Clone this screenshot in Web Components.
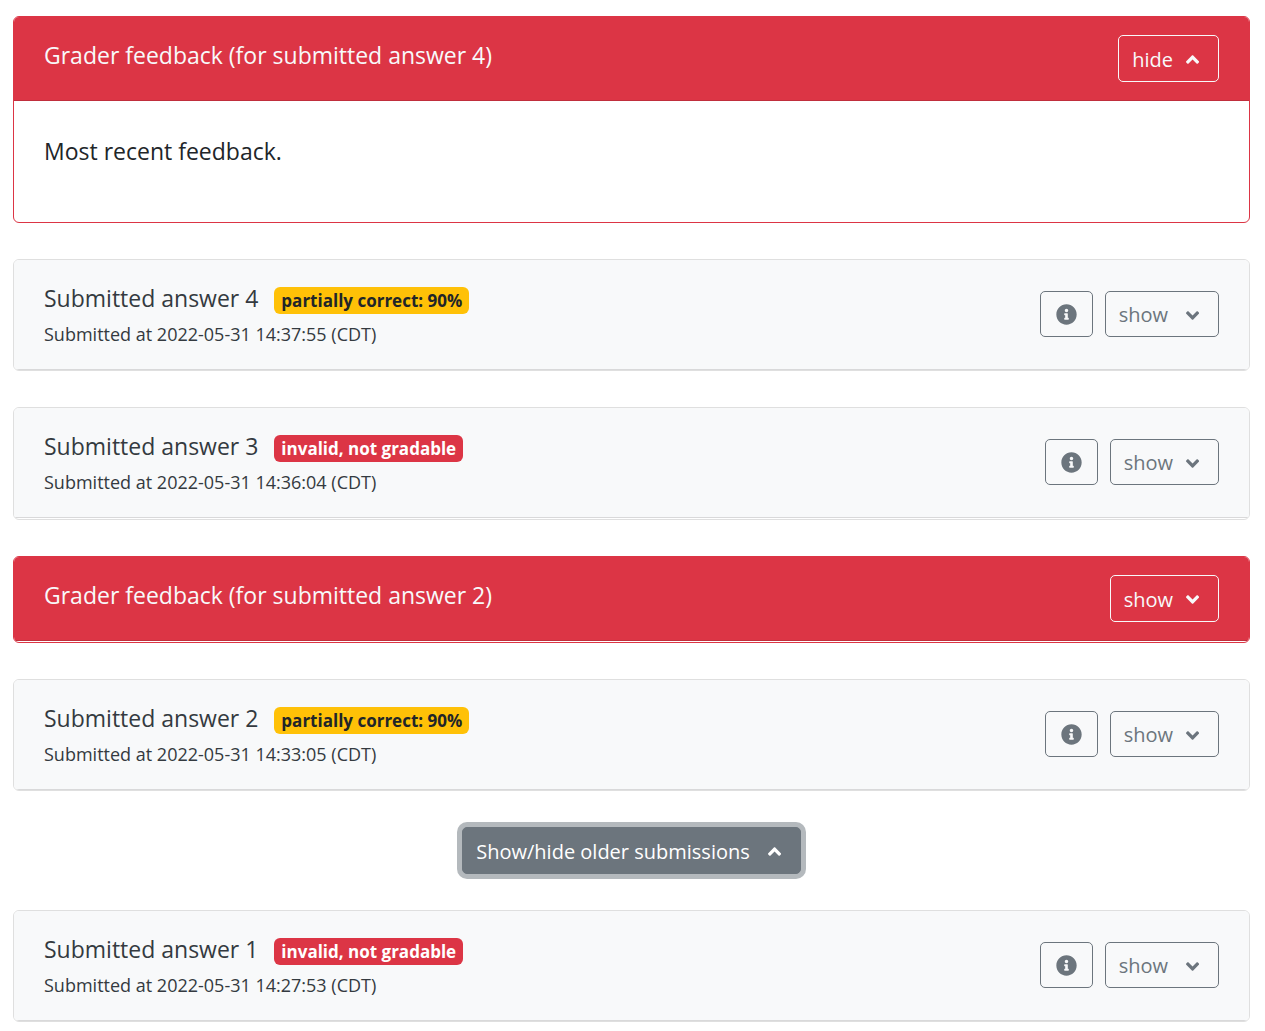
<!DOCTYPE html>
<html lang="en">
<head>
<meta charset="utf-8">
<meta name="viewport" content="width=device-width, initial-scale=1">
<title>Submissions</title>
<style>
  body {
    margin: 0;
    background: #fff;
    color: #212529;
    font-family: "Open Sans", "Noto Sans", sans-serif;
    font-size: 23px;
    line-height: 40px;
  }
</style>
</head>
<body>
<submission-history>
  <feedback-card answer="4" open>Most recent feedback.</feedback-card>
  <submission-card answer="4" date="2022-05-31 14:37:55 (CDT)" status="partial" roomy>partially correct: 90%</submission-card>
  <submission-card answer="3" date="2022-05-31 14:36:04 (CDT)" status="invalid" seam>invalid, not gradable</submission-card>
  <feedback-card answer="2"></feedback-card>
  <submission-card answer="2" date="2022-05-31 14:33:05 (CDT)" status="partial">partially correct: 90%</submission-card>
  <toggle-button variant="solid" icon="up" roomy>Show/hide older submissions</toggle-button>
  <submission-card answer="1" date="2022-05-31 14:27:53 (CDT)" status="invalid" roomy>invalid, not gradable</submission-card>
</submission-history>

<script>
  const ICONS = {
    up: ['0 0 320 512', 'M177 159.7l136 136c9.4 9.4 9.4 24.6 0 33.9l-22.6 22.6c-9.4 9.4-24.6 9.4-33.9 0L160 255.9l-96.4 96.4c-9.4 9.4-24.6 9.4-33.9 0L7 329.7c-9.4-9.4-9.4-24.6 0-33.9l136-136c9.4-9.5 24.6-9.5 34-.1z'],
    down: ['0 0 320 512', 'M143 352.3L7 216.3c-9.4-9.4-9.4-24.6 0-33.9l22.6-22.6c9.4-9.4 24.6-9.4 33.9 0l96.4 96.4 96.4-96.4c9.4-9.4 24.6-9.4 33.9 0l22.6 22.6c9.4 9.4 9.4 24.6 0 33.9l-136 136c-9.2 9.4-24.4 9.4-33.8 0z'],
    info: ['0 0 512 512', 'M256 8C119.043 8 8 119.083 8 256c0 136.997 111.043 248 248 248s248-110.997 248-248C504 119.083 392.957 8 256 8zm0 110c23.196 0 42 18.804 42 42s-18.804 42-42 42-42-18.804-42-42 18.804-42 42-42zm56 254c0 6.627-5.373 12-12 12h-88c-6.627 0-12-5.373-12-12v-24c0-6.627 5.373-12 12-12h12v-64h-12c-6.627 0-12-5.373-12-12v-24c0-6.627 5.373-12 12-12h64c6.627 0 12 5.373 12 12v100h12c6.627 0 12 5.373 12 12v24z']
  };

  function render(host, html) {
    host.attachShadow({ mode: 'open' }).innerHTML = html;
  }

  const CARD_CSS = `
    :host { display: block; border: 1px solid var(--edge); border-radius: 6px; overflow: hidden; }
    header { display: flex; justify-content: space-between; padding: 18px 30px; border-bottom: 1px solid rgba(0, 0, 0, .125); }
    h2 { margin: 0; font-size: inherit; font-weight: 400; }
  `;

  customElements.define('ui-icon', class extends HTMLElement {
    connectedCallback() {
      if (this.shadowRoot) return;
      const [box, path] = ICONS[this.getAttribute('name')];
      render(this, `
        <style>
          :host { display: flex; justify-content: center; width: 25px; }
          svg { display: block; height: 21px; fill: currentColor; }
        </style>
        <svg viewBox="${box}" aria-hidden="true"><path d="${path}"/></svg>`);
    }
  });

  customElements.define('toggle-button', class extends HTMLElement {
    connectedCallback() {
      if (this.shadowRoot) return;
      const icon = this.getAttribute('icon');
      render(this, `
        <style>
          :host { display: block; --tone: #6c757d; }
          :host([variant="light"]) { --tone: #f8f9fa; }
          button {
            display: flex; align-items: center; gap: 7px; min-height: 46px; margin: 0; padding: 7px 13px 5px;
            font: inherit; font-size: 20px; line-height: 32px; color: var(--tone);
            background: transparent; border: 1px solid var(--tone); border-radius: 5px; cursor: pointer;
          }
          :host([icon="info"]) button { padding: 6px 13px; }
          :host([variant]) button { min-height: 47px; }
          :host([roomy]) button { gap: 12px; }
          :host([variant="solid"]) button { color: #fff; background: #6c757d; box-shadow: 0 0 0 5px #b4b9bd; }
        </style>
        <button type="button"${icon === 'info' ? ' aria-label="Details"' : ''}><slot></slot><ui-icon name="${icon}"></ui-icon></button>`);
    }
  });

  customElements.define('status-badge', class extends HTMLElement {
    connectedCallback() {
      if (this.shadowRoot) return;
      render(this, `
        <style>
          :host { display: block; padding: 0 7px; border-radius: 6px; font-size: 17px; font-weight: 700; line-height: 27px; }
          :host([status="partial"]) { background: #ffc107; color: #212529; }
          :host([status="invalid"]) { background: #dc3545; color: #fff; }
        </style>
        <slot></slot>`);
    }
  });

  customElements.define('feedback-card', class extends HTMLElement {
    connectedCallback() {
      if (this.shadowRoot) return;
      const open = this.hasAttribute('open');
      render(this, `
        <style>
          ${CARD_CSS}
          :host { --edge: #dc3545; }
          header { background: #dc3545; color: #f8f9fa; }
          .body { min-height: 1px; }
          p { margin: 0; padding: 30px 30px 51px; }
        </style>
        <header>
          <h2>Grader feedback (for submitted answer ${this.getAttribute('answer')})</h2>
          <toggle-button variant="light" icon="${open ? 'up' : 'down'}">${open ? 'hide' : 'show'}</toggle-button>
        </header>
        <div class="body">${open ? '<p><slot></slot></p>' : ''}</div>`);
    }
  });

  customElements.define('submission-card', class extends HTMLElement {
    connectedCallback() {
      if (this.shadowRoot) return;
      const roomy = this.hasAttribute('roomy') ? 'roomy' : '';
      render(this, `
        <style>
          ${CARD_CSS}
          :host { --edge: #dfdfdf; }
          :host([seam]) { padding-bottom: 1px; }
          header { align-items: center; padding-bottom: 19px; background: #f8f9fa; color: #343a40; }
          .title { display: flex; align-items: baseline; gap: 16px; }
          time { display: block; font-size: 18px; line-height: 32px; }
          .actions { display: flex; gap: 12px; }
        </style>
        <header>
          <div>
            <div class="title">
              <h2>Submitted answer ${this.getAttribute('answer')}</h2>
              <status-badge status="${this.getAttribute('status')}"><slot></slot></status-badge>
            </div>
            <time>Submitted at ${this.getAttribute('date')}</time>
          </div>
          <div class="actions">
            <toggle-button icon="info"></toggle-button>
            <toggle-button icon="down" ${roomy}>show</toggle-button>
          </div>
        </header>`);
    }
  });

  customElements.define('submission-history', class extends HTMLElement {
    connectedCallback() {
      if (this.shadowRoot) return;
      render(this, `
        <style>
          :host { display: flex; flex-direction: column; gap: 36px; padding: 16px 15px 9px 13px; }
          ::slotted(toggle-button) { align-self: center; }
        </style>
        <slot></slot>`);
    }
  });
</script>
</body>
</html>
